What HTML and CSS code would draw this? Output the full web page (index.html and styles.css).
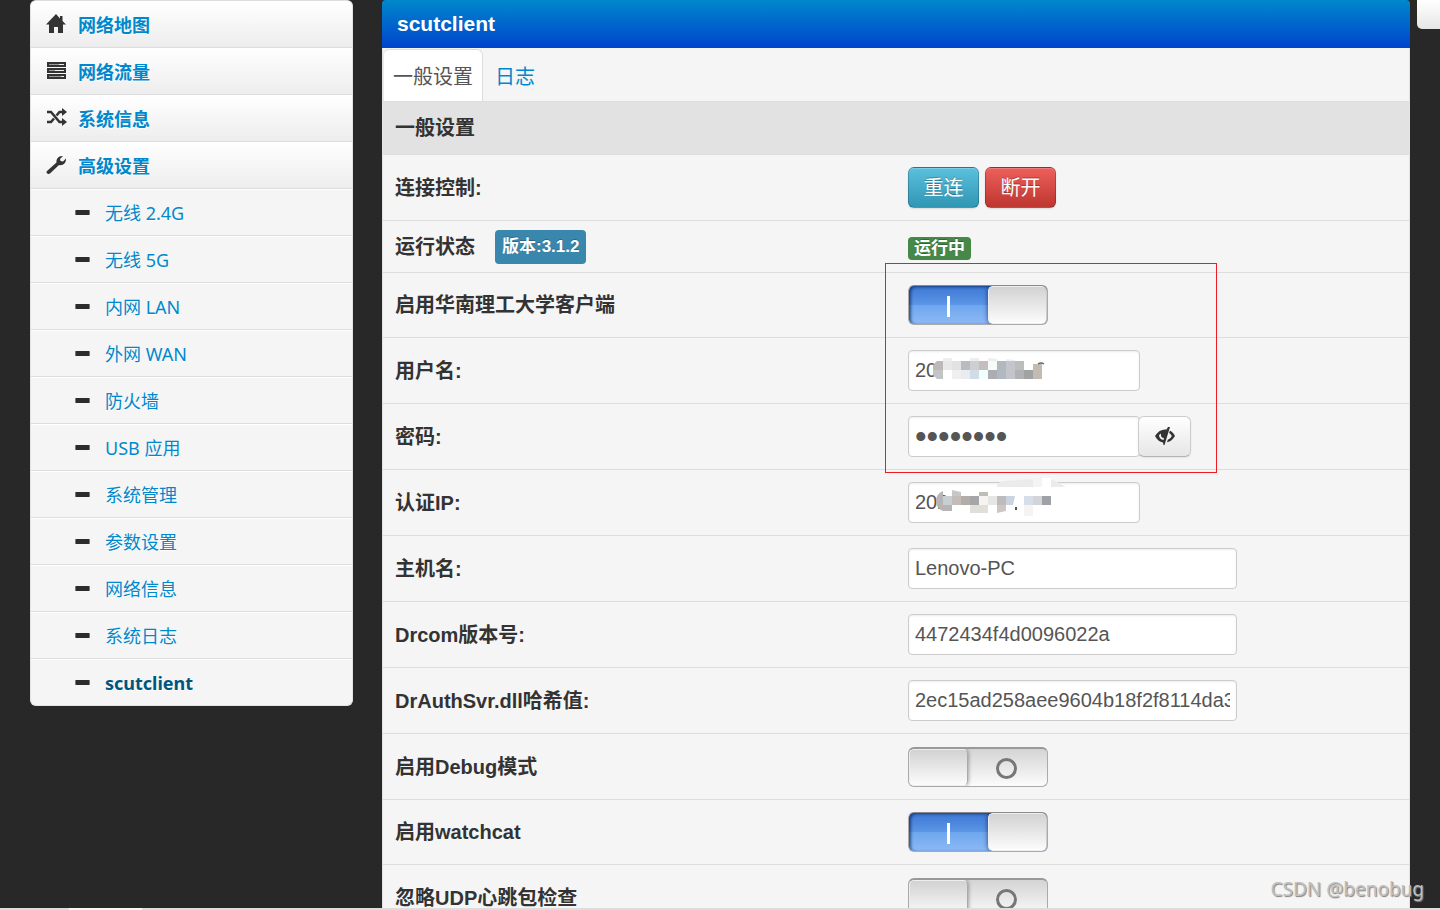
FILE: index.html
```html
<!DOCTYPE html>
<html lang="zh-CN">
<head>
<meta charset="utf-8">
<title>scutclient</title>
<link rel="stylesheet" href="styles.css">
</head>
<body>
<div class="page">
  <nav class="side">
    <a class="top" href="#"><svg class="ico" viewBox="0 0 20 20"><path d="M10 0 0 10.500h3V19h5v-6h4v6h5v-8.500h3L16.500 7V2h-2.500v2.500z"/></svg>网络地图</a>
    <a class="top" href="#"><svg class="ico" viewBox="0 0 20 20"><path d="M1 1h19v5H1zM1 7h19v5H1zM1 13h19v5H1z"/><path fill="#999" d="M3 3h15v1H3zM3 9h15v1H3zM3 15h15v1H3z"/><path fill="#eee" d="M13 3h5v1h-5zM9 9h9v1H9zM15 15h3v1h-3z"/></svg>网络流量</a>
    <a class="top" href="#"><svg class="ico" viewBox="0 0 20 20"><path fill="none" stroke="#333" stroke-width="2.500" d="M1 4h4l8.500 10H17M1 14h4l3-3.500M10.500 7.500 13.500 4H17"/><path d="M16 0l5 4-5 4zM16 10l5 4-5 4z"/></svg>系统信息</a>
    <a class="top" href="#"><svg class="ico" viewBox="0 0 20 20"><path d="M1 16 10.500 7.500C10 3.500 13 .5 17 1l-3 3 .5 2 2.500.5 3-3c.5 4-3 7.500-7 6.500L4 18.500C2 20-.5 17.500 1 16z"/></svg>高级设置</a>
    <a class="sub" href="#"><i class="dash"></i>无线 2.4G</a>
    <a class="sub" href="#"><i class="dash"></i>无线 5G</a>
    <a class="sub" href="#"><i class="dash"></i>内网 LAN</a>
    <a class="sub" href="#"><i class="dash"></i>外网 WAN</a>
    <a class="sub" href="#"><i class="dash"></i>防火墙</a>
    <a class="sub" href="#"><i class="dash"></i>USB 应用</a>
    <a class="sub" href="#"><i class="dash"></i>系统管理</a>
    <a class="sub" href="#"><i class="dash"></i>参数设置</a>
    <a class="sub" href="#"><i class="dash"></i>网络信息</a>
    <a class="sub" href="#"><i class="dash"></i>系统日志</a>
    <a class="sub current" href="#"><i class="dash"></i>scutclient</a>
  </nav>
  <main class="panel">
    <h1 class="title">scutclient</h1>
    <div class="tabs"><a class="tab active" href="#">一般设置</a><a class="tab" href="#">日志</a></div>
    <h2 class="section">一般设置</h2>
    <div class="row"><span>连接控制:</span><div class="ctl"><button class="btn info">重连</button><button class="btn danger">断开</button></div></div>
    <div class="row short"><div class="ctl">运行状态<span class="version">版本:3.1.2</span></div><div class="ctl"><span class="running">运行中</span></div></div>
    <div class="row toggle"><label for="enable">启用华南理工大学客户端</label><div class="ctl"><input class="switch" type="checkbox" id="enable" checked></div></div>
    <div class="row"><label for="user">用户名:</label><div class="ctl"><input class="text" id="user" value="20">
      <svg class="mosaic" viewBox="0 0 150 41">
        <path fill="#eee" d="M19 8h9v3h-9zM46 8h9v3h-9zM64 8l9 1v2h-9zM82 9l9 1v1h-9z"/>
        <path fill="#bcbab9" d="M19 11h-6l-4 4v5h10z"/><path fill="#e8e8e8" d="M19 11h9v9h-9z"/><path fill="#e2e2e2" d="M28 11h9v9h-9z"/><path fill="#b8bcc0" d="M37 11h9v9h-9z"/><path fill="#cfcfd1" d="M46 11h9v9h-9z"/><path fill="#c4bfbd" d="M55 11h9v9h-9z"/><path fill="#f7fcfb" d="M64 11h9v9h-9z"/><path fill="#b1b8bf" d="M73 11h9v18h-9z"/><path fill="#c2c6ca" d="M82 11h9v18h-9z"/><path fill="#bdbdbd" d="M91 11h9v9h-9z"/><path fill="#bdbdbd" d="M100 11h9v9h-9z" opacity="0"/><path fill="#c2bbb3" d="M109 14h9v15h-9z"/>
        <path fill="#c2c4c5" d="M9 20h10v9h-6l-4-4z"/><path fill="#efefef" d="M28 20h9v9h-9z"/><path fill="#e8ebf0" d="M37 20h9v9h-9z"/><path fill="#d0dce6" d="M46 20h9v9h-9z"/><path fill="#f0feff" d="M55 20h9v9h-9z"/><path fill="#abadb1" d="M64 20h9v9h-9z"/><path fill="#b1b2b5" d="M91 20h9v9h-9z"/><path fill="#a1a3a3" d="M100 20h9v9h-9z"/><path fill="none" stroke="#666" stroke-width="1.500" d="M114 14q3-2 6 0"/>
      </svg></div></div>
    <div class="row"><label for="pass">密码:</label><div class="ctl"><input class="text pass" type="password" id="pass" value="12345678"><button class="eye" aria-label="显示密码"><svg viewBox="0 0 20 18"><path fill-rule="evenodd" d="M0 9C3 4 7 2 11.500 2.500L13 0h2L9.500 18H8.500L8 15.500C4.500 15 2 12.500 0 9zm4-1c0 3 2 4.500 4.500 5l.5-2C6.500 11 5.500 9 6 6.500z"/><path d="M15 3.500c2.500 1.500 4 3.500 5 5.500-2 3.500-4.500 5.500-8 6.300l.8-2.500c2-.8 3-2 4-3.800-.7-1.300-1.500-2.300-2.800-3z"/></svg></button></div></div>
    <div class="row"><label for="ip">认证IP:</label><div class="ctl"><input class="text" id="ip" value="202">
      <svg class="mosaic raised" viewBox="0 0 150 41">
        <path fill="#ebebeb" d="M73 11q-1-5 8-6l28-2q16-2 24 3l9 5z"/><path fill="#f4f4f4" d="M109 3h9v8h-9z"/><path fill="#fff" d="M118 2h9v9h-9z"/>
        <path fill="#b6b5b4" d="M19 15q-7 3-7 10t7 10h9v-6h-9z"/><path fill="#c4c8ca" d="M28 14l9 2v4h-9z"/><path fill="#c0bcb8" d="M55 16h9v4h-9z"/>
        <path fill="#c8cfd3" d="M19 20h9v9h-9z"/><path fill="#c4bcb8" d="M28 20h9v9h-9z"/><path fill="#b3aca8" d="M37 20h9v9h-9z"/><path fill="#a5a6aa" d="M46 20h9v9h-9z"/><path fill="#f7f3ee" d="M55 20h9v9h-9z"/><path fill="#e6e6e6" d="M64 20h9v9h-9z"/><path fill="#bebcbb" d="M73 20h9v9h-9z"/><path fill="#c9d4e0" d="M82 20h9l-2 9h-7z"/><path fill="#d5dee9" d="M100 20h9v9h-9z"/><path fill="#d2d4d8" d="M109 20h9v9h-9z"/><path fill="#9fa1a9" d="M118 20h9v9h-9z"/>
        <path fill="#e2dfdb" d="M46 29h18v8H46z"/><path fill="#ccc7c4" d="M73 29h9v6l-9 2z"/><path fill="#f7f3f0" d="M100 29h9v11h-9z"/><path fill="#555" d="M91 31h2v3h-2z"/>
      </svg></div></div>
    <div class="row"><label for="host">主机名:</label><div class="ctl"><input class="text wide" id="host" value="Lenovo-PC"></div></div>
    <div class="row"><label for="ver">Drcom版本号:</label><div class="ctl"><input class="text wide" id="ver" value="4472434f4d0096022a"></div></div>
    <div class="row"><label for="hash">DrAuthSvr.dll哈希值:</label><div class="ctl"><input class="text wide" id="hash" value="2ec15ad258aee9604b18f2f8114da38db16efd00"></div></div>
    <div class="row"><label for="debug">启用Debug模式</label><div class="ctl"><input class="switch" type="checkbox" id="debug"></div></div>
    <div class="row toggle"><label for="watch">启用watchcat</label><div class="ctl"><input class="switch" type="checkbox" id="watch" checked></div></div>
    <div class="row"><label for="udp">忽略UDP心跳包检查</label><div class="ctl"><input class="switch" type="checkbox" id="udp"></div></div>
    <div class="marker"></div>
  </main>
</div>
<div class="corner"></div>
<div class="watermark">CSDN @benobug</div>
<div class="strip"></div>
</body>
</html>
```

FILE: styles.css
```css
*, *::before, *::after { box-sizing: border-box; }
body { margin: 0; height: 100vh; overflow: hidden; background: #282828; color: #333; font: 20px/30px "Liberation Sans", "Noto Sans CJK SC", sans-serif; }
a { color: #08c; text-decoration: none; }
.page { display: grid; grid-template-columns: 323fr 1028fr; column-gap: 29px; align-items: start; padding: 0 30px; }
.side { overflow: hidden; border: 1px solid #e3e3e3; border-top-color: #ddd; border-radius: 6px; background: #f5f5f5; font: 18px/27px "Noto Sans", "Noto Sans CJK SC", sans-serif; }
.side a { display: flex; align-items: center; min-height: 47px; border-bottom: 1px solid #ddd; text-shadow: 0 1px #fff; }
.side .top { gap: 12px; padding: 3px 15px 0; background: linear-gradient(#fff, #ededed); font-weight: 700; }
.ico { width: 20px; height: 20px; margin-bottom: 4px; fill: #333; overflow: visible; }
.side .sub { gap: 15px; padding: 3px 45px 0 44px; box-shadow: inset 0 1px #fff; }
.dash { width: 15px; height: 5px; margin-bottom: 3px; background: #2c2c2c; border: solid #777; border-width: 0 1px; border-radius: 1px; }
.side .current { min-height: 46px; border-bottom: 0; color: #005580; font-weight: 700; }
.panel { position: relative; border: 1px solid #e3e3e3; border-top: 0; border-radius: 6px 6px 0 0; background: #f5f5f5; }
.title { margin: 0 -1px; padding: 9px 15px; border-radius: 4px 4px 0 0; background: linear-gradient(#08c, #04c); color: #fff; font-size: 21px; line-height: 30px; }
.tabs { display: flex; height: 54px; padding-top: 1px; border-bottom: 1px solid #ddd; }
.tab { margin-right: 3px; padding: 13px 9px 0; }
.active { padding-top: 12px; border: 1px solid #ddd; border-left-color: #e8e8e8; border-bottom: 0; border-radius: 6px 6px 0 0; background: #fff; color: #555; }
.section { margin: 0; padding: 11px 12px; border-bottom: 1px solid #ddd; background: #e2e2e2; font-size: 20px; line-height: 30px; }
.row { display: grid; grid-template-columns: 1fr 1fr; align-items: center; min-height: 66px; border-bottom: 1px solid #ddd; font-weight: 700; }
.row > * { padding: 0 12px; }
.short { min-height: 52px; }
.toggle { min-height: 65px; }
.ctl { position: relative; display: flex; align-items: center; }
.btn { width: 71px; height: 41px; margin-right: 6px; padding: 0; border: 1px solid rgba(0,0,0,.2); border-radius: 6px; color: #fff; font: 20px/30px "Liberation Sans", "Noto Sans CJK SC", sans-serif; text-shadow: 0 -1px rgba(0,0,0,.3); box-shadow: inset 0 1px rgba(255,255,255,.2), 0 1px 2px rgba(0,0,0,.1); }
.info { background: linear-gradient(#5bc0de, #2f96b4); }
.danger { background: linear-gradient(#ee5f5b, #bd362f); }
.version { margin-left: 20px; padding: 2px 7px; border-radius: 4px; background: #3a87ad; color: #fff; font-size: 17px; text-shadow: 0 -1px rgba(0,0,0,.25); }
.running { margin-top: 3px; padding: 0 6px; border-radius: 4px; background: #468847; color: #fff; font-size: 17px; line-height: 23px; text-shadow: 0 -1px rgba(0,0,0,.25); }
.text { width: 232px; height: 41px; padding: 0 6px; border: 1px solid #ccc; border-radius: 4px; background: #fff; color: #555; font: 20px/30px "Liberation Sans", sans-serif; box-shadow: inset 0 1px 2px rgba(0,0,0,.08); }
.wide { width: 329px; }
.pass { font-size: 33px; }
.eye { display: flex; align-items: center; justify-content: center; width: 53px; height: 41px; margin-left: -2px; padding: 0 0 2px; border: 1px solid #ccc; border-bottom-color: #b3b3b3; border-radius: 6px; background: linear-gradient(#fff, #e6e6e6); box-shadow: 0 1px 2px rgba(0,0,0,.08); }
.eye svg { width: 20px; height: 18px; fill: #333; }
.mosaic { position: absolute; top: 0; left: 28px; width: 150px; height: 41px; }
.raised { top: -6px; }
.switch { appearance: none; display: flex; align-items: center; width: 140px; height: 40px; margin: 0; overflow: hidden; border: 1px solid #aaa; border-top: 2px solid #999; border-radius: 6px; background: linear-gradient(#d4d4d4, #fcfcfc); }
.switch::before { content: ""; align-self: stretch; width: 59px; border: 1px solid #eee; border-right-color: #aaa; border-radius: 5px; background: linear-gradient(#d2d2d2, #fcfcfc); box-shadow: 0 0 4px rgba(0,0,0,.45); }
.switch::after { content: ""; width: 21px; height: 21px; margin: 2px 0 0 28px; border: 3px solid #777; border-radius: 50%; }
.switch:checked { flex-direction: row-reverse; border: 1px solid #aaa; border-top-color: #8a8a8a; background: linear-gradient(#3c77d4, #5c96e6 50%, #6ea6ee 50%, #8cb9f5); box-shadow: inset 2px 1px 3px rgba(0,20,70,.6); }
.switch:checked::before { border-right-color: #ccc; box-shadow: 0 0 5px rgba(0,20,70,.7); }
.switch:checked::after { width: 3px; margin: 2px 38px 0 0; border: 0; border-radius: 0; background: #fff; }
.marker { position: absolute; top: 263px; left: calc(50% - 11px); width: 332px; height: 210px; border: 1px solid #ed1c24; pointer-events: none; }
.corner { position: absolute; top: 0; right: 0; width: 23px; height: 29px; border-radius: 0 0 0 5px; background: linear-gradient(#fff, #e6e6e6); }
.watermark { position: absolute; right: 16px; bottom: 8px; color: #c0c0c0; font: 19px/26px "Noto Sans", sans-serif; text-shadow: 1px 1px 1px #808080; }
.strip { position: absolute; bottom: 0; left: 0; right: 0; height: 2px; background: linear-gradient(90deg, #ddd 69px, #f8f8f8 69px 142px, #ddd 142px); }
```
